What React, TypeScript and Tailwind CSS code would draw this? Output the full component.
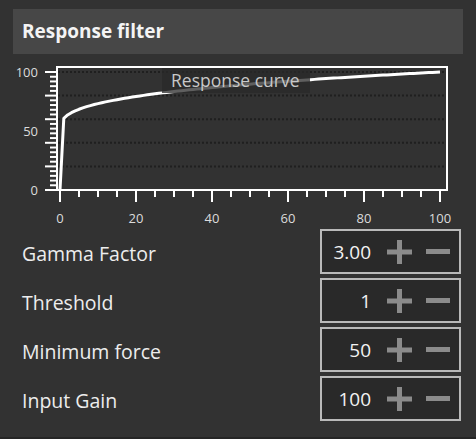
import React from 'react';

const ROWS = [
  { label: 'Gamma Factor', value: '3.00' },
  { label: 'Threshold', value: '1' },
  { label: 'Minimum force', value: '50' },
  { label: 'Input Gain', value: '100' },
];

/* chart mapping, page coordinates */
const X0 = 60;
const XS = 3.8;
const Y0 = 190;
const YS = 1.18;
const px = (x: number) => X0 + x * XS;
const py = (y: number) => Y0 - y * YS;

function curve() {
  const pts: number[][] = [[px(0), py(0)]];
  for (let x = 1; x <= 100; x += 1) {
    pts.push([px(x), py(50 + 50 * Math.pow(x / 100, 1 / 3))]);
  }
  return pts.map((p) => p.join(',')).join(' ');
}

const FONT = { fontFamily: '"Open Sans", "Noto Sans", sans-serif' };

function Chart() {
  const xTicks = Array.from({ length: 21 }, (_, i) => i * 5);
  const yTicks = Array.from({ length: 26 }, (_, i) => i * 4);
  return (
    <svg width={476} height={172} viewBox="0 54 476 172" className="block" style={FONT}>
      {[100, 80, 60, 40, 20].map((v) => (
        <line key={v} x1={58} x2={446} y1={py(v)} y2={py(v)} stroke="#1f1f1f" strokeWidth={2} strokeDasharray="2 2" />
      ))}
      <polyline points={curve()} fill="none" stroke="#fff" strokeWidth={3} strokeLinejoin="round" />
      <rect x={162} y={68} width={148} height={25} fill="#2a2a2a" fillOpacity={0.75} />
      <text x={171} y={86.5} fontSize={17.5} fill="#c8c8c8">Response curve</text>
      <path d="M57 190 V67 H447 V190" fill="none" stroke="#fff" strokeWidth={2} />
      <line x1={45} x2={448} y1={190} y2={190} stroke="#fff" strokeWidth={2} />
      {yTicks.map((v) => (
        <line key={v} x1={v % 20 === 0 ? 45 : 50} x2={57} y1={py(v)} y2={py(v)} stroke="#fff" strokeWidth={2} />
      ))}
      {xTicks.map((v) => (
        <line key={v} x1={px(v)} x2={px(v)} y1={190} y2={v % 20 === 0 ? 202 : 197} stroke="#fff" strokeWidth={2} />
      ))}
      {[0, 50, 100].map((v) => (
        <text key={v} x={38} y={py(v) + 4.5} fontSize={13} fill="#dcdcdc" textAnchor="end">{v}</text>
      ))}
      {[0, 20, 40, 60, 80, 100].map((v) => (
        <text key={v} x={px(v)} y={222.5} fontSize={13} fill="#dcdcdc" textAnchor="middle">{v}</text>
      ))}
    </svg>
  );
}

function Spinner({ value }: { value: string }) {
  return (
    <div className="ml-auto flex h-[45px] w-[141px] items-center border-2 border-[#b9b9b9] bg-[#292929]">
      <span className="w-[49px] pt-[2px] text-right text-[19px] text-[#f2f2f2]">{value}</span>
      <svg width={25} height={24} viewBox="0 0 25 24" className="ml-[16px]">
        <rect x={10} y={0} width={5} height={24} fill="#8b8b8b" />
        <rect x={0} y={9.5} width={25} height={5} fill="#8b8b8b" />
      </svg>
      <span className="ml-[14px] h-[5px] w-[24px] bg-[#8b8b8b]" />
    </div>
  );
}

export default function App() {
  return (
    <div className="h-[439px] w-[476px] bg-[#252525]" style={FONT}>
      <div className="h-[437px] bg-[#323232] pt-[9px]">
        <div className="mx-[13px] flex h-[45px] items-center bg-[#474747] pl-[9px]">
          <h1 className="text-[19px] font-bold text-[#f4f4f4]">Response filter</h1>
        </div>

        <Chart />

        <div className="flex flex-col gap-[4px] pt-[3px]">
          {ROWS.map((r) => (
            <div key={r.label} className="flex h-[45px] items-center pl-[22px] pr-[15px]">
              <span className="pt-[4px] text-[19.5px] text-[#ededed]">{r.label}</span>
              <Spinner value={r.value} />
            </div>
          ))}
        </div>
      </div>
    </div>
  );
}
